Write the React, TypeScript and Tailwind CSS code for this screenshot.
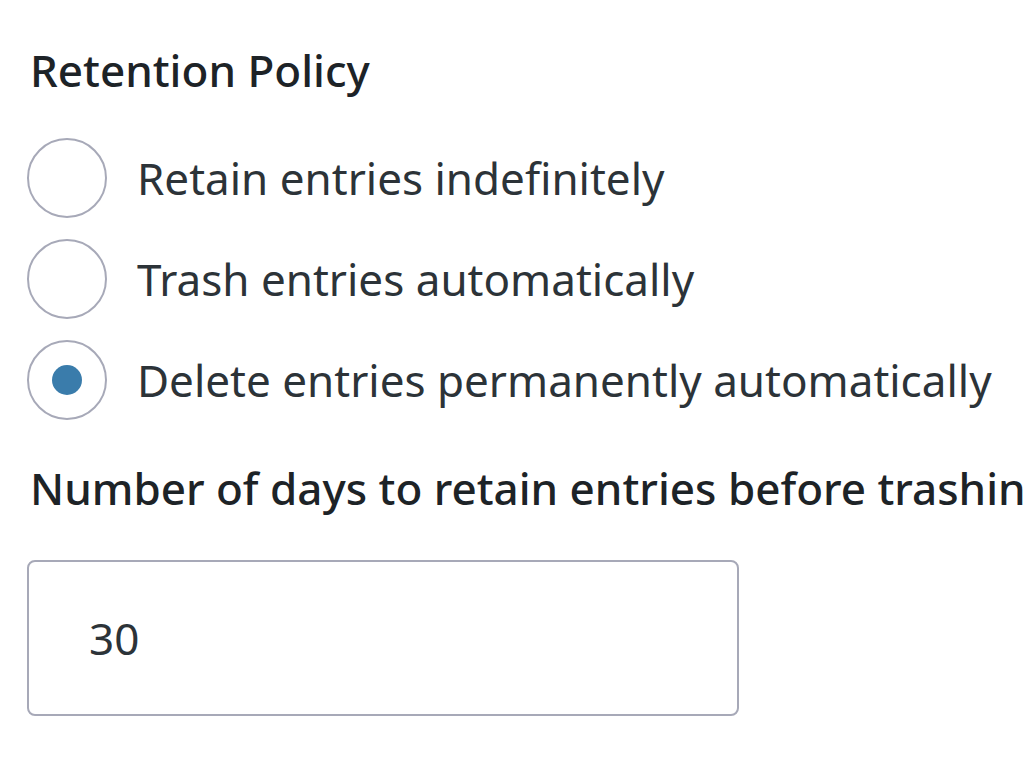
import React from "react";

function Radio({ checked, label }: { checked?: boolean; label: string }) {
  return (
    <label className="flex items-center h-[101px]">
      <span className="w-[80px] h-[80px] rounded-full border-2 border-[#a7a9b8] bg-white flex items-center justify-center shrink-0">
        {checked && <span className="w-[30px] h-[30px] rounded-full bg-[#3a7cab]" />}
      </span>
      <span className="ml-[30px] text-[44px] text-[#2c3338] whitespace-nowrap">{label}</span>
    </label>
  );
}

export default function App() {
  return (
    <div
      className="w-[1024px] h-[768px] bg-white overflow-hidden pl-[27px]"
      style={{ fontFamily: '"Noto Sans", "Open Sans", sans-serif' }}
    >
      <div className="pt-[38px] pl-[3px] text-[44px] font-medium text-[#1d2327] leading-[64px] whitespace-nowrap">
        Retention Policy
      </div>
      <div className="mt-[25px] flex flex-col">
        <Radio label="Retain entries indefinitely" />
        <Radio label="Trash entries automatically" />
        <Radio checked label="Delete entries permanently automatically" />
      </div>
      <div className="mt-[26px] pl-[3px] text-[44px] font-medium text-[#1d2327] leading-[64px] whitespace-nowrap">
        Number of days to retain entries before trashing
      </div>
      <div className="mt-[40px] w-[712px] h-[156px] border-2 border-[#a7a9b8] rounded-[8px] flex items-center pl-[60px]">
        <span className="text-[44px] text-[#2c3338]">30</span>
      </div>
    </div>
  );
}
